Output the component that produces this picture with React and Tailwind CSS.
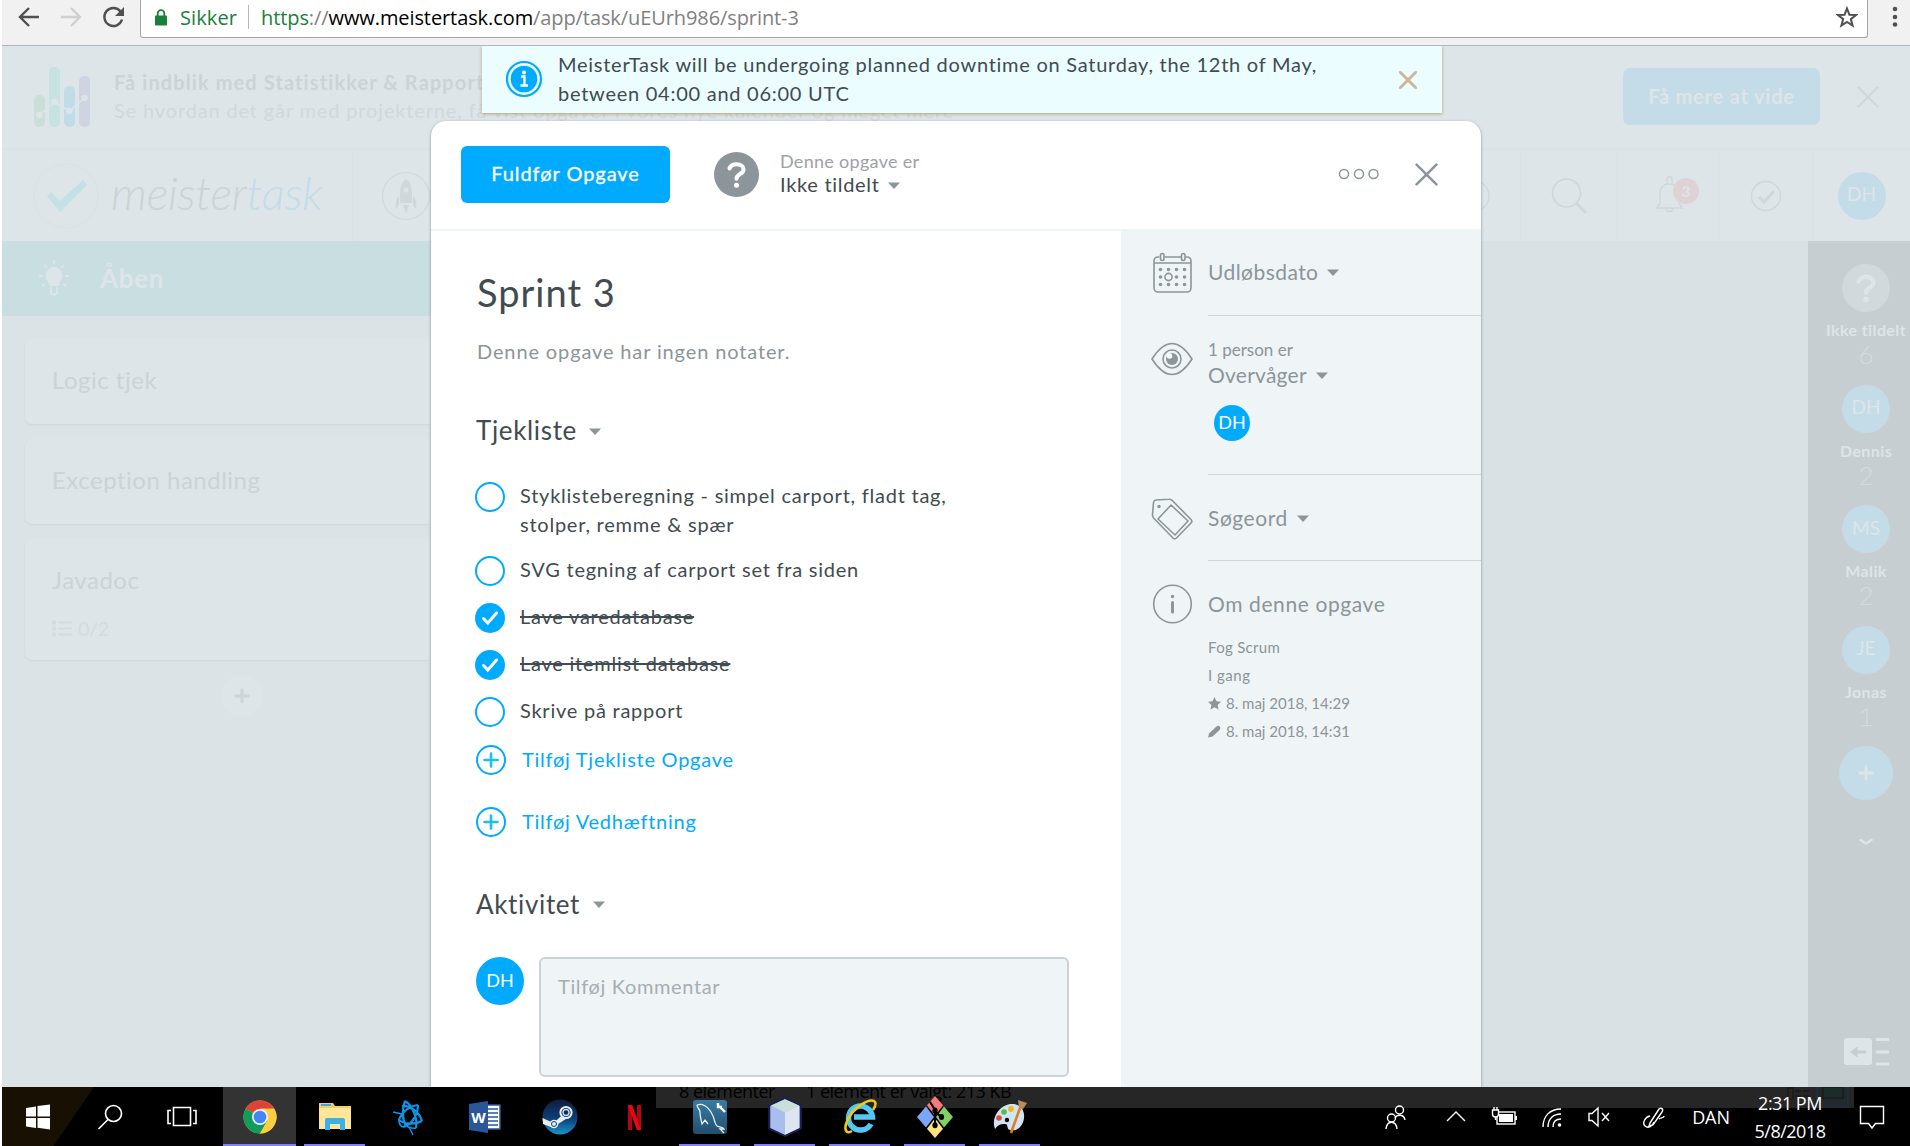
import React from "react";

const Caret = ({ className = "" }) => (
  <svg width="12" height="7" viewBox="0 0 12 7" className={`shrink-0 text-[#8c9599] ${className}`}>
    <path d="M0 .5h12L6 7z" fill="currentColor" />
  </svg>
);

const Cross = ({ size, width, className = "" }) => (
  <svg width={size} height={size} viewBox="0 0 22 22" className={`shrink-0 ${className}`} fill="none" stroke="currentColor" strokeWidth={width} strokeLinecap="round">
    <path d="M1.5 1.5l19 19M20.5 1.5l-19 19" />
  </svg>
);

/* ---------- Browser bar ---------- */

function BrowserBar() {
  return (
    <div className="flex h-[46px] border-b border-[#b4b5b8] bg-[#f1f1f1] font-['Open_Sans',sans-serif]">
      <svg width="138" height="45" viewBox="2 0 138 45" fill="none" strokeWidth="2.4">
        <path d="M39 17H21M29 8l-9 9 9 9" stroke="#505050" />
        <path d="M61 17h18M71 8l9 9-9 9" stroke="#cfcfcf" />
        <path d="M120.500 11.500a9 9 0 1 0 1.500 8" stroke="#505050" />
        <path d="M124 7v9h-9z" fill="#505050" />
      </svg>
      <div className="flex h-[38px] w-[1728px] items-start rounded-b-[3px] border border-t-0 border-[#a5a6a8] bg-white text-[20px] leading-[36px]">
        <svg width="12" height="18" viewBox="0 0 12 18" className="mt-[9px] ml-[14px]">
          <rect x="0" y="6.500" width="12" height="10" rx="1" fill="#188038" />
          <path d="M2.700 8V4.500a3.300 3.300 0 0 1 6.600 0V8" fill="none" stroke="#188038" strokeWidth="1.800" />
        </svg>
        <span className="ml-[13px] w-[68px] tracking-[0.1px] text-[#188038]">Sikker</span>
        <span className="mt-[5px] h-6 w-px bg-[#b9b9b9]" />
        <span className="ml-[12px] tracking-[-0.09px] whitespace-nowrap text-[#808080]">
          <span className="text-[#188038]">https</span>://<span className="text-black">www.meistertask.com</span>/app/task/uEUrh986/sprint-3
        </span>
        <svg width="22" height="22" viewBox="0 0 22 22" className="mt-[6px] mr-[9px] ml-auto" fill="none" stroke="#505050" strokeWidth="2">
          <path d="M11 2.500l2.400 6.200 6.600.3-5.200 4.100 1.800 6.400L11 15.900l-5.600 3.600 1.800-6.400L2 9l6.600-.3z" />
        </svg>
      </div>
      <svg width="42" height="45" viewBox="1868 0 42 45" fill="#505050">
        <circle cx="1895" cy="9" r="2.300" />
        <circle cx="1895" cy="17" r="2.300" />
        <circle cx="1895" cy="24.500" r="2.300" />
      </svg>
    </div>
  );
}

/* ---------- Faded project board ---------- */

function Promo() {
  return (
    <div className="flex h-[104px] border-b-2 border-[#dae2e5] bg-[#dde5e8]">
      <svg width="60" height="62" viewBox="33 66 60 62" className="mt-[20px] ml-[31px]">
        <rect x="34" y="95" width="11" height="32" rx="5" fill="#cbdfd8" />
        <rect x="49" y="67" width="11" height="60" rx="5" fill="#c6e2e1" />
        <rect x="64" y="86" width="11" height="41" rx="5" fill="#c1dce7" />
        <rect x="79" y="76" width="11" height="51" rx="5" fill="#d0d3e2" />
        <path d="M39.500 115L54.500 102l15 9 15-13" fill="none" stroke="#dde5e8" strokeWidth="1.500" />
        <g fill="#dde5e8">
          <circle cx="39.500" cy="115" r="3.200" /><circle cx="54.500" cy="102" r="3.200" /><circle cx="69.500" cy="111" r="3.200" /><circle cx="84.500" cy="98" r="3.200" />
        </g>
      </svg>
      <div className="mt-[22px] ml-[21px] text-[20px] leading-[28px] whitespace-nowrap text-[#cbd3d6]">
        <p className="font-bold tracking-[1.1px]">Få indblik med Statistikker &amp; Rapporter</p>
        <p className="tracking-[0.85px] text-[#d0d8db]">Se hvordan det går med projekterne, få vist opgaver i vores nye kalender og meget mere</p>
      </div>
      <div className="mt-[22px] ml-auto flex h-[57px] w-[197px] items-center justify-center rounded-[7px] bg-[#c4dce8] pb-[2px] text-[20px] font-bold tracking-[0.8px] text-[#dde5e8]">Få mere at vide</div>
      <Cross size={22} width={2.2} className="mt-[40px] mr-[31px] ml-[37px] text-[#cfd7da]" />
    </div>
  );
}

function Header() {
  return (
    <div className="flex h-[91px] items-center bg-[#dde5e8] text-[#cfd7da]">
      <div className="flex h-full w-[351px] items-center border-r border-[#d9e1e4]">
        <svg width="66" height="66" viewBox="33 163 66 66" className="ml-[31px]">
          <circle cx="66" cy="196" r="32" fill="none" stroke="#d9e1e4" />
          <path d="M47 196l4-4 9 9 23-21 4 5-27 27z" fill="#c3e0e6" />
        </svg>
        <span className="mb-[6px] ml-[12px] text-[46px] leading-none font-light tracking-[-0.2px] text-[#cbd3d6] italic">
          meister<span className="text-[#c4dce8]">task</span>
        </span>
      </div>
      <svg width="50" height="50" viewBox="0 0 50 50" className="ml-[28px]">
        <circle cx="25" cy="25" r="23.500" fill="none" stroke="currentColor" />
        <path d="M25 8c5 4 6 9 6 17v7H19v-7c0-8 1-13 6-17zM18 25v9l-3 4c-1-6 0-10 3-13zM32 25v9l3 4c1-6 0-10-3-13zM22 34h6l-3 9z" fill="currentColor" />
        <circle cx="25" cy="19" r="2.500" fill="#dde5e8" />
      </svg>
      <div className="ml-auto flex h-full">
        <div className="flex w-[64px] items-center border-r border-[#d9e1e4]">
          <svg width="34" height="34" viewBox="0 0 34 34" fill="none" stroke="currentColor" strokeWidth="1.300"><circle cx="17" cy="17" r="15" /></svg>
        </div>
        <div className="flex w-[97px] items-center justify-center border-r border-[#d9e1e4]">
          <svg width="36" height="36" viewBox="0 0 36 36" fill="none" stroke="currentColor" strokeWidth="1.600"><circle cx="15.500" cy="15" r="14" /><path d="M26 26l8 8" strokeWidth="3" strokeLinecap="round" /></svg>
        </div>
        <div className="flex w-[101px] items-center border-r border-[#d9e1e4]">
          <svg width="46" height="38" viewBox="0 0 46 38" className="mb-[3px] ml-[37px]" fill="none" stroke="currentColor" strokeWidth="1.400">
            <path d="M2 33h25l-3-5V19c0-6-3-10-9.500-10S5 13 5 19v9zM12 9V4a2.500 2.500 0 0 1 5 0v5M11 33a3.500 3.500 0 0 0 7 0" />
            <circle cx="31" cy="16" r="13" fill="#dfd2d5" stroke="none" />
            <text x="31" y="21.500" textAnchor="middle" fontSize="15" fontWeight="700" fill="#dde5e8" stroke="none">3</text>
          </svg>
        </div>
        <div className="flex w-[94px] items-center justify-center border-r border-[#d9e1e4]">
          <svg width="32" height="32" viewBox="0 0 32 32" fill="none" stroke="currentColor" strokeWidth="1.500"><circle cx="16" cy="16" r="14.500" /><path d="M9 17l5 5 10-11" strokeWidth="3" /></svg>
        </div>
        <div className="flex w-[97px] items-center justify-center">
          <Avatar>DH</Avatar>
        </div>
      </div>
    </div>
  );
}

const Avatar = ({ children }) => (
  <div className="flex size-12 shrink-0 items-center justify-center rounded-full bg-[#c4dce8] pb-[2px] text-[19px] text-[#dde5e8]">{children}</div>
);

const Question = ({ className }) => (
  <svg viewBox="0 0 48 48" className={className}>
    <circle cx="24" cy="24" r="24" fill="currentColor" />
    <path d="M16.500 17.500c1.500-3.500 4.500-4.500 7.500-4.500 4.500 0 7.500 2 7.500 5.700 0 5.300-7.500 4.300-7.500 9.800" fill="none" stroke="var(--mark)" strokeWidth="4.400" strokeLinecap="round" />
    <circle cx="24" cy="35.500" r="2.700" fill="var(--mark)" />
  </svg>
);

function Card({ title, tall }) {
  return (
    <div className={`w-[434px] rounded-[7px] bg-[#dde5e8] pt-[31px] pl-[27px] shadow-[0_1px_2px_rgba(120,140,150,0.14)] ${tall ? "h-[121px]" : "h-[85px]"}`}>
      <p className="text-[24px] leading-[20px] tracking-[0.5px] whitespace-nowrap">{title}</p>
      {tall && (
        <div className="mt-[27px] flex items-center gap-[6px] text-[20px] text-[#d3dbde]">
          <svg width="20" height="17" viewBox="0 0 20 17" fill="none" stroke="currentColor" strokeWidth="1.800">
            <path d="M6 2.500h14M6 8.500h14M6 14.500h14" />
            <circle cx="2" cy="2.500" r="1.300" /><circle cx="2" cy="8.500" r="1.300" /><circle cx="2" cy="14.500" r="1.300" />
          </svg>
          <span className="leading-[22px] tracking-[-0.5px]">0/2</span>
        </div>
      )}
    </div>
  );
}

function Column() {
  return (
    <div className="w-[480px] bg-[#dbe3e6] text-[#cbd3d6]">
      <div className="flex h-[75px] items-center bg-[#c9dee1] text-[#dde5e8]">
        <svg width="34" height="40" viewBox="0 0 34 40" className="ml-[35px]">
          <path d="M17 8a8.500 8.500 0 0 1 8.500 8.500c0 4-3 5.500-4 10.500h-9c-1-5-4-6.500-4-10.500A8.500 8.500 0 0 1 17 8z" fill="currentColor" />
          <path d="M14 28v6c0 2 6 2 6 0v-6M17 1v4M7 6l3 3M27 6l-3 3M2 17h4M28 17h4M5 27l3-2M29 27l-3-2" fill="none" stroke="currentColor" strokeWidth="1.800" />
        </svg>
        <span className="ml-[29px] text-[26px] font-bold tracking-[0.7px]">Åben</span>
      </div>
      <div className="mt-[23px] ml-[23px] flex flex-col gap-[15px]">
        <Card title="Logic tjek" />
        <Card title="Exception handling" />
        <Card title="Javadoc" tall />
      </div>
      <div className="mt-[15px] ml-[219px] flex size-[42px] items-center justify-center rounded-full bg-[#dde5e8]">
        <svg width="16" height="16" viewBox="0 0 16 16" stroke="currentColor" strokeWidth="2.800" strokeLinecap="round"><path d="M8 2v12M2 8h12" /></svg>
      </div>
    </div>
  );
}

const members = [
  { initials: null, name: "Ikke tildelt", count: 6 },
  { initials: "DH", name: "Dennis", count: 2 },
  { initials: "MS", name: "Malik", count: 2 },
  { initials: "JE", name: "Jonas", count: 1 },
];

function MemberRail() {
  return (
    <div className="ml-auto flex h-full w-[102px] flex-col items-center bg-[#c7ced1] pt-[23px] pl-[14px] text-[#dde5e8]">
      {members.map((m) => (
        <div key={m.name} className="flex h-[120.500px] w-full shrink-0 flex-col items-center">
          {m.initials ? <Avatar>{m.initials}</Avatar> : <Question className="size-12 shrink-0 text-[#d2d9dc] [--mark:#dde5e8]" />}
          <span className="mt-[8px] text-[16px] leading-[20px] font-bold tracking-[0.4px] whitespace-nowrap">{m.name}</span>
          <span className="text-[26px] leading-[28px] font-light text-[#d4dbde]">{m.count}</span>
        </div>
      ))}
      <div className="flex size-[54px] shrink-0 items-center justify-center rounded-full bg-[#c4dce8]">
        <svg width="16" height="16" viewBox="0 0 16 16" stroke="currentColor" strokeWidth="2.800" strokeLinecap="round"><path d="M8 2v12M2 8h12" /></svg>
      </div>
      <svg width="14" height="8" viewBox="0 0 14 8" className="mt-[38px] shrink-0" fill="none" stroke="currentColor" strokeWidth="2.600" strokeLinecap="round"><path d="M1.500 2L7 5.500 12.500 2" /></svg>
      <svg width="45" height="28" viewBox="0 0 45 28" className="mt-auto mb-[21px] shrink-0">
        <rect width="28" height="27" rx="3" fill="currentColor" />
        <path d="M22 14H11" stroke="#c7ced1" strokeWidth="3.200" /><path d="M6 14l7.500-5.500v11z" fill="#c7ced1" />
        <path d="M33 1.500h11M33 14h11M33 26h11" stroke="currentColor" strokeWidth="3" strokeLinecap="round" />
      </svg>
    </div>
  );
}

/* ---------- Task dialog ---------- */

function Notice() {
  return (
    <div className="absolute top-0 left-[480px] flex h-[67px] w-[960px] bg-[#ebfdff] shadow-[0_1px_3px_rgba(150,130,60,0.65)]">
      <svg width="38" height="38" viewBox="0 0 38 38" className="mt-[14px] ml-[23px]">
        <circle cx="19" cy="19" r="17" fill="none" stroke="#00aaff" strokeWidth="2.200" />
        <circle cx="19" cy="19" r="13.300" fill="#00aaff" />
        <circle cx="19" cy="12.500" r="2" fill="#fff" />
        <path d="M16 16.500h3.500V25M15.500 25.500h7.500" fill="none" stroke="#fff" strokeWidth="2.300" />
      </svg>
      <p className="mt-[4px] ml-[15px] text-[20px] leading-[29px] tracking-[0.74px] whitespace-nowrap text-[#414b50]">
        MeisterTask will be undergoing planned downtime on Saturday, the 12th of May,
        <br />
        between 04:00 and 06:00 UTC
      </p>
      <Cross size={18} width={3.6} className="mt-[25px] mr-[25px] ml-auto text-[#cfb795]" />
    </div>
  );
}

const checklist = [
  { text: "SVG tegning af carport set fra siden" },
  { text: "Lave varedatabase", done: true },
  { text: "Lave itemlist database", done: true },
  { text: "Skrive på rapport" },
];

const Check = ({ done }) => (
  <svg width="30" height="30" viewBox="0 0 30 30" className="shrink-0">
    <circle cx="15" cy="15" r="14" fill={done ? "#00aaff" : "none"} stroke="#00aaff" strokeWidth="2" />
    {done && <path d="M8.500 15.500l4.300 4.500 8.700-10" fill="none" stroke="#fff" strokeWidth="3" strokeLinecap="round" />}
  </svg>
);

const AddRow = ({ children }) => (
  <div className="ml-px flex h-[30px] items-center gap-[16px] text-[20px] leading-[30px] whitespace-nowrap text-[#00aaff]">
    <svg width="30" height="30" viewBox="0 0 30 30">
      <circle cx="15" cy="15" r="14" fill="none" stroke="#00aaff" strokeWidth="2" />
      <path d="M15 8.500v13M8.500 15h13" stroke="#1cbfe8" strokeWidth="2.600" strokeLinecap="round" />
    </svg>
    <span className="pb-[3px] tracking-[0.75px]">{children}</span>
  </div>
);

function TaskBody() {
  return (
    <div className="w-[690px] pl-[44px] text-[#414b50]">
      <h1 className="mt-[39px] ml-[2px] text-[38px] leading-[44px] tracking-[1px]">Sprint 3</h1>
      <p className="mt-[25px] ml-[2px] text-[20px] leading-[24px] tracking-[0.87px] text-[#8c9599]">Denne opgave har ingen notater.</p>
      <h2 className="mt-[52px] ml-px flex items-center gap-[12px] text-[26px] leading-[30px] tracking-[0.65px]">
        Tjekliste <Caret className="mt-[2px]" />
      </h2>
      <div className="mt-[37px] flex gap-[15px]">
        <Check />
        <p className="-mt-px text-[20px] leading-[29px] tracking-[0.76px]">
          Styklisteberegning - simpel carport, fladt tag,
          <br />
          stolper, remme &amp; spær
        </p>
      </div>
      <div className="mt-[17px] flex flex-col gap-[17px]">
        {checklist.map((item) => (
          <div key={item.text} className="flex h-[30px] gap-[15px]">
            <Check done={item.done} />
            <span className={`text-[20px] leading-[27px] tracking-[0.76px] ${item.done ? "line-through decoration-2" : ""}`}>{item.text}</span>
          </div>
        ))}
      </div>
      <div className="mt-[18px] flex flex-col gap-[32px]">
        <AddRow>Tilføj Tjekliste Opgave</AddRow>
        <AddRow>Tilføj Vedhæftning</AddRow>
      </div>
      <h2 className="mt-[52px] ml-px flex items-center gap-[13px] text-[26px] leading-[30px] tracking-[0.65px]">
        Aktivitet <Caret />
      </h2>
      <div className="mt-[38px] ml-px flex gap-[15px]">
        <div className="flex size-12 items-center justify-center rounded-full bg-[#00aaff] pb-[2px] text-[18px] text-white">DH</div>
        <div className="h-[120px] w-[530px] rounded-[6px] border-2 border-[#cbd3d6] bg-[#eff4f7] pt-[14px] pl-[17px] text-[20px] leading-[26px] tracking-[0.65px] text-[#a6aeb1]">Tilføj Kommentar</div>
      </div>
    </div>
  );
}

const iconStroke = { fill: "none", stroke: "currentColor", strokeWidth: 1.6 };

function Section({ icon, last, className, children }) {
  return (
    <div className="flex pl-[30px]">
      <div className="flex w-[57px] shrink-0 items-start">{icon}</div>
      <div className={`flex-1 ${last ? "" : "border-b border-[#d0d7da]"} ${className}`}>{children}</div>
    </div>
  );
}

const Label = ({ children, className = "" }) => (
  <div className={`flex items-center gap-[9px] text-[21px] leading-[26px] whitespace-nowrap ${className}`}>{children}</div>
);

function TaskAside() {
  return (
    <div className="w-[360px] bg-[#eff4f7] text-[#8c9599]">
      <Section
        className="h-[87px] pt-[30px]"
        icon={
          <svg width="42" height="42" viewBox="0 0 42 42" className="mt-[23px]" {...iconStroke}>
            <path d="M8.500 5H7a4 4 0 0 0-4 4v27a4 4 0 0 0 4 4h29a4 4 0 0 0 4-4V9a4 4 0 0 0-4-4h-1M13.500 5H30M3 11h37" />
            <rect x="9.500" y="1.500" width="3.500" height="7" rx="1.700" /><rect x="30.500" y="1.500" width="3.500" height="7" rx="1.700" />
            <g fill="currentColor" stroke="none">
              {[9.500, 17.500, 25.500, 33.500].map((x) => [17.500, 25, 32.500].map((y) => (x === 17.500 && y === 25 ? null : <circle key={`${x}-${y}`} cx={x} cy={y} r="1.800" />)))}
            </g>
            <circle cx="17.500" cy="25" r="3.600" />
          </svg>
        }
      >
        <Label className="tracking-[0.45px]">Udløbsdato <Caret /></Label>
      </Section>
      <Section
        className="h-[159px] pt-[23px]"
        icon={
          <svg width="42" height="34" viewBox="0 0 42 34" className="mt-[26px]" {...iconStroke}>
            <path d="M1 17C8 6 14 1.500 21 1.500S34 6 41 17c-7 11-13 15.500-20 15.500S8 28 1 17z" />
            <circle cx="21" cy="17" r="9" />
            <circle cx="21" cy="17" r="6" fill="currentColor" stroke="none" />
            <circle cx="18.500" cy="14" r="2.800" fill="#fff" stroke="none" />
          </svg>
        }
      >
        <p className="text-[17px] leading-[22px]">1 person er</p>
        <Label className="mt-px tracking-[0.25px]">Overvåger <Caret /></Label>
        <div className="mt-[17px] ml-[6px] flex size-9 items-center justify-center rounded-full bg-[#00aaff] pb-px text-[18px] text-white">DH</div>
      </Section>
      <Section
        className="h-[86px] pt-[30px]"
        icon={
          <svg width="42" height="42" viewBox="0 0 42 42" className="mt-[23px]" {...iconStroke}>
            <path d="M2.500 4.500A3 3 0 0 1 5 2l13-.7a4 4 0 0 1 3 1L40 21.500a2.500 2.500 0 0 1 0 3.500L25.500 40a2.500 2.500 0 0 1-3.500 0L3 20.500a5 5 0 0 1-1.500-4z" />
            <path d="M20 7l17 16-13 14L7 21z" strokeLinejoin="round" />
            <circle cx="8" cy="8.500" r="1.700" fill="currentColor" stroke="none" />
          </svg>
        }
      >
        <Label className="tracking-[0.55px]">Søgeord <Caret /></Label>
      </Section>
      <Section
        last
        className="pt-[30px]"
        icon={
          <svg width="42" height="42" viewBox="0 0 42 42" className="mt-[22px]" {...iconStroke}>
            <circle cx="21.500" cy="21" r="18.800" />
            <circle cx="21.500" cy="13.500" r="1.700" fill="currentColor" stroke="none" />
            <path d="M21.500 19.500v9.500" strokeWidth="3" strokeLinecap="round" />
          </svg>
        }
      >
        <Label className="tracking-[0.6px]">Om denne opgave</Label>
        <div className="mt-[16px] text-[15px] leading-[28px] whitespace-nowrap">
          <p className="tracking-[0.3px]">Fog Scrum</p>
          <p className="tracking-[0.5px]">I gang</p>
          <p className="flex items-center gap-[5px]">
            <svg width="13" height="13" viewBox="0 0 24 24" fill="currentColor"><path d="M12 0l3.600 8 8.400.8-6.300 5.800L19.500 23 12 18.700 4.500 23l1.800-8.400L0 8.800 8.400 8z" /></svg>
            8. maj 2018, 14:29
          </p>
          <p className="flex items-center gap-[5px]">
            <svg width="13" height="13" viewBox="0 0 13 13" fill="currentColor"><path d="M0 12.500l1-4L8.500 1.500C10-.2 14 1.500 11.500 5L4.500 11.500z" /></svg>
            8. maj 2018, 14:31
          </p>
        </div>
      </Section>
    </div>
  );
}

function TaskDialog() {
  return (
    <div className="absolute top-[75px] left-[429px] flex h-[966px] w-[1050px] flex-col overflow-hidden rounded-t-[15px] bg-white shadow-[0_1px_3px_rgba(90,105,115,0.7)]">
      <div className="flex h-[108px] shrink-0 items-center pb-[2px] pl-[30px]">
        <button className="h-[57px] w-[209px] rounded-[6px] bg-[#00aaff] pb-[2px] text-[20px] tracking-[0.95px] text-white">
          <span className="[-webkit-text-stroke:0.3px]">Fuldfør Opgave</span>
        </button>
        <Question className="ml-[44px] size-[45px] text-[#8c9599] [--mark:#fff]" />
        <div className="mb-[2px] ml-[21px] whitespace-nowrap">
          <p className="text-[18px] leading-[22px] tracking-[0.3px] text-[#9aa2a6]">Denne opgave er</p>
          <p className="flex items-center gap-[8px] text-[20px] leading-[24px] tracking-[0.7px] text-[#414b50]">Ikke tildelt <Caret className="mt-[2px]" /></p>
        </div>
        <svg width="42" height="12" viewBox="0 0 42 12" className="mr-[35px] ml-auto" fill="none" stroke="#8c9599" strokeWidth="1.500">
          <circle cx="6" cy="6" r="4.500" /><circle cx="21" cy="6" r="4.500" /><circle cx="35.500" cy="6" r="4.500" />
        </svg>
        <Cross size={23} width={2.4} className="mr-[43px] text-[#8c9599]" />
      </div>
      <div className="flex flex-1">
        <div className="border-t-2 border-[#eff4f7]">
          <TaskBody />
        </div>
        <TaskAside />
      </div>
    </div>
  );
}

/* ---------- Taskbar ---------- */

const icons = {
  chrome: (
    <svg width="34" height="34" viewBox="0 0 34 34">
      <circle cx="17" cy="17" r="16.500" fill="#fbc93b" />
      <path d="M17 17L2.700 8.700A16.500 16.500 0 0 1 31.300 8.700H17z" fill="#db4437" />
      <path d="M17 17L2.700 8.700A16.500 16.500 0 0 0 17 33.500l7.200-12.400z" fill="#0f9d58" />
      <path d="M17 8.700h14.300a16.500 16.500 0 0 1-14.300 24.800l7.200-12.400z" fill="#ffcd40" />
      <circle cx="17" cy="17" r="8" fill="#f1f1f1" />
      <circle cx="17" cy="17" r="6.300" fill="#4285f4" />
    </svg>
  ),
  explorer: (
    <svg width="34" height="30" viewBox="0 0 34 30">
      <path d="M1 1h14l2 3h16v23H1z" fill="#f5cf6a" /><path d="M1 6h32v21H1z" fill="#ffe699" />
      <path d="M3 3h10" stroke="#3aa7e0" strokeWidth="2" />
      <path d="M7 28V18q0-2 2-2h16q2 0 2 2v10h-5v-6h-10v6z" fill="#39b0e8" />
    </svg>
  ),
  battle: (
    <svg width="34" height="40" viewBox="0 0 34 40" fill="none" stroke="#0a96ec" strokeWidth="2.200">
      <path d="M12 4c7 4 13 17 11 27M12 4c-3 8-3 18 1 25M9 9c7-1 17 5 20 15M29 24c-7 4-18 3-23-1M6 23c2-7 10-14 19-15M25 8c0 9-6 20-15 22" />
      <path d="M10 30c-3-1-4-4-4-7M23 31c-3 1-7-1-10-2" strokeWidth="1.600" />
      <path d="M0 15l9 2M20 38l-4-8" strokeWidth="1.400" />
    </svg>
  ),
  word: (
    <svg width="34" height="34" viewBox="0 0 34 34">
      <rect x="17" y="5" width="15" height="24" fill="#fff" stroke="#2b579a" strokeWidth="1.500" />
      <path d="M19 9h11M19 13h11M19 17h11M19 21h11M19 25h11" stroke="#2b579a" strokeWidth="1.700" />
      <path d="M1 4l19-3v32L1 30z" fill="#2b579a" />
      <text x="10.500" y="23" textAnchor="middle" fontSize="15" fontWeight="700" fill="#fff">W</text>
    </svg>
  ),
  steam: (
    <svg width="36" height="36" viewBox="0 0 36 36">
      <defs><linearGradient id="steam" x2="0" y2="1"><stop stopColor="#101c3c" /><stop offset=".55" stopColor="#0c3f78" /><stop offset="1" stopColor="#1a95c9" /></linearGradient></defs>
      <circle cx="18" cy="18" r="17.500" fill="url(#steam)" />
      <path d="M.500 19l11 5 10-9 4 4-11 7-3 3-10.500-4z" fill="#e8edf2" />
      <circle cx="24" cy="13.500" r="5.600" fill="#0c2f62" stroke="#e8edf2" strokeWidth="2" /><circle cx="24" cy="13.500" r="3" fill="none" stroke="#cfd8e0" strokeWidth="1.400" />
      <circle cx="12" cy="25" r="4.300" fill="#e8edf2" /><circle cx="12" cy="25" r="2.500" fill="none" stroke="#0c3f78" strokeWidth="1" />
    </svg>
  ),
  netflix: (
    <svg width="13" height="25" viewBox="0 0 13 25">
      <path d="M0 0h4v25H0zM9 0h4v25H9z" fill="#b20710" /><path d="M0 0h4.200L13 25H8.800z" fill="#e50914" />
    </svg>
  ),
  mysql: (
    <svg width="36" height="36" viewBox="0 0 36 36">
      <defs><linearGradient id="workbench" x2="0" y2="1"><stop stopColor="#3a7ca5" /><stop offset="1" stopColor="#1f4f6c" /></linearGradient></defs>
      <rect x="1" y="1" width="34" height="34" rx="3" fill="url(#workbench)" />
      <path d="M5 6c5-2 11 1 15 9 3 5 2 9 5 12 2 1 6 1 7 3l-4 0 4 4M5 6c0 3 3 4 3 7 0 4 1 8 2 12l3-4 3 4" fill="none" stroke="#e6eef3" strokeWidth="1.300" />
      <path d="M26 4v4h4M27 7l6 6" stroke="#fff" strokeWidth="2.400" fill="none" />
    </svg>
  ),
  cube: (
    <svg width="36" height="42" viewBox="0 0 34 40" stroke="#1b1f55" strokeWidth="2" strokeLinejoin="round">
      <path d="M17 2l15 7v22l-15 7-15-7V9z" fill="#a8bce0" />
      <path d="M17 3l13.500 6-13.500 7L3.500 9z" fill="#c9dfd9" stroke="none" /><path d="M3.500 9L17 16v21L3.500 30.500z" fill="#a9bdee" stroke="none" /><path d="M30.500 9L17 16v21l13.500-6.500z" fill="#dde5f0" stroke="none" />
    </svg>
  ),
  ie: (
    <svg width="36" height="36" viewBox="0 0 36 36" fill="none">
      <path d="M29 25A12 12 0 1 1 30.500 18H12" stroke="#54c8f5" strokeWidth="5.500" />
      <path d="M10 32c-6 4-9-2-4-12S26-1 32 2c3 2 1 6-1 9" stroke="#f5c518" strokeWidth="2.600" />
    </svg>
  ),
  git: (
    <svg width="36" height="42" viewBox="0 0 36 36" preserveAspectRatio="none">
      <path d="M18 0l8 8-8 9-8-9z" fill="#f8797c" /><path d="M27 9l9 9-9 9-8-9z" fill="#84cf63" /><path d="M18 19l8 9-8 8-8-8z" fill="#ffe17e" /><path d="M9 9l8 9-8 9-9-9z" fill="#7ba7f8" />
      <path d="M13 5l5 7v13M18 13l6 5" fill="none" stroke="#000" strokeWidth="2" />
      <circle cx="18" cy="12.500" r="2.600" /><circle cx="24.500" cy="18" r="2.600" /><circle cx="18" cy="25" r="2.600" />
    </svg>
  ),
  paint: (
    <svg width="36" height="36" viewBox="0 0 36 36">
      <path d="M3 30C-1 20 6 7 18 5c10-1 15 6 14 14-1 9-8 14-14 12-4-1-1-6-5-6-5 0-7 1-10 5z" fill="#cfe5f3" />
      <circle cx="7" cy="19" r="2.800" fill="#e2483d" /><circle cx="12" cy="13" r="2.800" fill="#58b947" /><circle cx="19" cy="10" r="2.900" fill="#f5b520" /><circle cx="15" cy="21" r="2.200" fill="#0a0a0a" />
      <path d="M28 9L19 34" stroke="#e07b28" strokeWidth="2.600" /><path d="M26 1l1 8 4 1 4-6z" fill="#b98a5e" />
    </svg>
  ),
};

const apps = [
  { id: "explorer", open: true },
  { id: "battle" },
  { id: "word" },
  { id: "steam" },
  { id: "netflix" },
  { id: "mysql", open: true },
  { id: "cube", open: true },
  { id: "ie", open: true },
  { id: "git", open: true },
  { id: "paint", open: true },
];

const Tray = ({ className, children }) => (
  <div className={`flex h-full shrink-0 items-center justify-center ${className}`}>
    <svg width="26" height="26" viewBox="0 0 26 26" fill="none" stroke="#fff" strokeWidth="1.400">{children}</svg>
  </div>
);

function Taskbar() {
  return (
    <div className="relative flex h-[59px] overflow-hidden bg-black font-['Open_Sans',sans-serif] text-white">
      <div className="absolute top-0 left-0 h-full w-[92px] bg-[#171003] [clip-path:polygon(0_0,100%_0,56%_100%,0_100%)]" />
      <div className="absolute top-0 left-[654px] flex h-[21px] w-[1198px] overflow-hidden bg-[#262626] text-[18px] leading-[20px] tracking-[-0.5px] whitespace-nowrap text-black">
        <span className="-mt-[6px] ml-[23px] w-[127px]">8 elementer</span>
        <span className="-mt-[6px]">1 element er valgt: 213 KB</span>
        <svg width="62" height="21" viewBox="0 0 62 21" className="mr-[5px] ml-auto" fill="none" stroke="#1a1a1a" strokeWidth="1.500">
          <rect x="1" y="1" width="5" height="11" /><path d="M8 4h6M16 4h6M8 9h6M16 9h6" /><rect x="30" y="-3" width="31" height="23" fill="#22282c" stroke="#193442" /><rect x="36" y="0" width="20" height="11" fill="#1c2c28" />
        </svg>
      </div>
      <div className="relative flex h-full w-full">
        <svg width="221" height="59" viewBox="2 1087 221 59" fill="none" stroke="#fff" strokeWidth="1.600" className="shrink-0">
          <path d="M26 1108l10-1.600v10.100H26zM37.500 1106l12.500-1.500v12H37.500zM26 1118h10v10l-10-1.500zM37.500 1118H50v11.500l-12.500-1.700z" fill="#fff" stroke="none" />
          <circle cx="113.500" cy="1113.500" r="8" /><path d="M108 1119.500l-9.500 9.500" />
          <path d="M173.500 1107.500h17v18h-17zM171 1110.500h-3v13h3M193 1110.500h3v13h-3" />
        </svg>
        <div className="mr-px flex h-full w-[73px] shrink-0 flex-col items-center justify-end border-b-2 border-[#8280f6] bg-[#333] pb-[10px]">{icons.chrome}</div>
        {apps.map((app) => (
          <div key={app.id} className="flex h-full w-[75px] shrink-0 flex-col items-center">
            <div className="flex h-[57px] items-center pt-[3px]">{icons[app.id]}</div>
            {app.open && <div className="h-0.5 w-[61px] bg-[#8280f6]" />}
          </div>
        ))}
        <div className="ml-auto flex h-full">
          <Tray className="mr-[16px] w-[40px]">
            <circle cx="16.500" cy="6" r="4" /><circle cx="8.500" cy="14" r="4" /><path d="M12 14c2-4 9-4 10 2M3 25c1-9 10-9 11 0" />
          </Tray>
          <Tray className="w-[48px]"><path d="M4 17l9-9 9 9" /></Tray>
          <Tray className="w-[48px]">
            <rect x="6" y="8" width="18" height="12" /><path d="M8 10h14v8H8z" fill="#fff" stroke="none" /><path d="M25 12v4" strokeWidth="2" />
            <path d="M1.500 6h6v4a3 3 0 0 1-6 0zM3 3v3M6 3v3M4.500 13v3" fill="#000" />
          </Tray>
          <Tray className="w-[48px]"><path d="M4 23C4 12 11 5 22 5M9 23c0-8 5-13 13-13M14 23c0-5 3-8 8-8" /><circle cx="20.500" cy="21" r="1.800" fill="#fff" stroke="none" /></Tray>
          <Tray className="w-[48px]"><path d="M2 9.500h3l6-5.500v18l-6-5.500H2zM15 9l7 8M22 9l-7 8" /></Tray>
          <Tray className="w-[60px]"><path d="M9 19L18 5c2-2 5 0 3 3l-9 13-4 1zM9 12c-5 1-8 7-5 10s8 0 9-4M18 15c3-2 5-1 5-3" /></Tray>
          <div className="flex w-[54px] items-center justify-center text-[18px] tracking-[-0.1px]"><span className="pt-[2px]">DAN</span></div>
          <div className="flex w-[104px] flex-col items-center pt-[2px] text-[18px] leading-[28px] tracking-[-0.5px] whitespace-nowrap">
            <span>2:31 PM</span>
            <span>5/8/2018</span>
          </div>
          <Tray className="mr-[8px] w-[60px]"><path d="M1.500 2.500h23v17h-8L13 24l-3.500-4.500h-8z" /></Tray>
        </div>
      </div>
    </div>
  );
}

export default function App() {
  return (
    <div className="h-[1146px] w-[1910px] overflow-hidden bg-white pl-[2px] font-['Lato',sans-serif]">
      <BrowserBar />
      <div className="relative h-[1041px] overflow-hidden bg-[#d9e1e4]">
        <Promo />
        <Header />
        <div className="flex h-[846px]">
          <Column />
          <MemberRail />
        </div>
        <TaskDialog />
        <Notice />
      </div>
      <Taskbar />
    </div>
  );
}
